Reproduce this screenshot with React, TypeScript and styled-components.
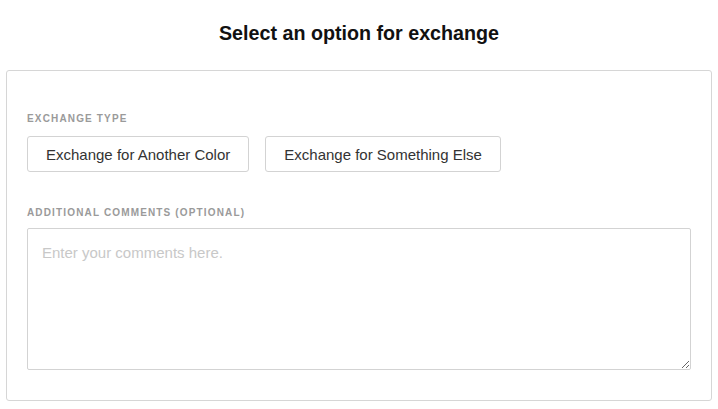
import React from "react";
import styled, { createGlobalStyle } from "styled-components";

const Global = createGlobalStyle`
  html, body { margin: 0; padding: 0; background: #fff; }
  body { font-family: "Liberation Sans", Arial, sans-serif; }
  * { box-sizing: border-box; }
`;

const Page = styled.div`
  padding: 0 6px;
`;

const Title = styled.h1`
  margin: 0;
  padding: 20px 0 24px;
  font-size: 19.7px;
  line-height: 26px;
  font-weight: 700;
  color: #111;
  text-align: center;
`;

const Card = styled.div`
  border: 1px solid #d6d6d6;
  border-radius: 3px;
  padding: 42px 20px 30px;
  display: flex;
  flex-direction: column;
`;

const Label = styled.div<{ $top?: number }>`
  font-size: 10px;
  line-height: 12px;
  font-weight: 700;
  letter-spacing: 1.15px;
  color: #9a9a9a;
  text-transform: uppercase;
  margin-top: ${(p) => p.$top ?? 0}px;
`;

const Options = styled.div`
  display: flex;
  gap: 16px;
  margin-top: 11px;
`;

const Option = styled.button`
  height: 36px;
  padding: 0 18px;
  border: 1px solid #d3d3d3;
  border-radius: 3px;
  background: #fff;
  font-family: "Liberation Sans", Arial, sans-serif;
  font-size: 15px;
  color: #333;
  cursor: pointer;
`;

const Comments = styled.textarea`
  margin-top: 9px;
  height: 142px;
  width: 100%;
  border: 1px solid #d3d3d3;
  border-radius: 2px;
  padding: 15px 14px;
  font-family: "Liberation Sans", Arial, sans-serif;
  font-size: 15px;
  color: #333;
  resize: vertical;
  &::placeholder { color: #c8c8c8; }
`;

export default function App() {
  return (
    <Page>
      <Global />
      <Title>Select an option for exchange</Title>
      <Card>
        <Label>Exchange Type</Label>
        <Options>
          <Option>Exchange for Another Color</Option>
          <Option>Exchange for Something Else</Option>
        </Options>
        <Label $top={35}>Additional Comments (Optional)</Label>
        <Comments placeholder="Enter your comments here." />
      </Card>
    </Page>
  );
}
